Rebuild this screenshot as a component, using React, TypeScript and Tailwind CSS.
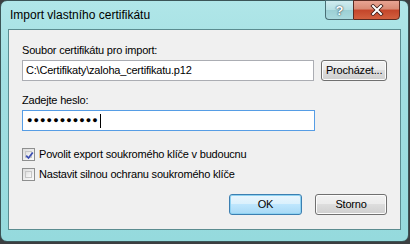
import React from "react";

const font = { fontFamily: '"Liberation Sans", Arial, sans-serif' };

function Checkbox({ checked }: { checked: boolean }) {
  return (
    <div className="w-[13px] h-[13px] border border-[#8e8f8f] bg-[linear-gradient(135deg,#dcdcdc,#fbfbfb)] p-[2px] shrink-0">
      <div className="w-full h-full border border-[#c6c6c6] bg-[linear-gradient(135deg,#e0e0e0,#fafafa)] relative">
        {checked && (
          <svg viewBox="0 0 9 9" className="absolute left-[-1px] top-[-1px] w-[9px] h-[9px]">
            <path d="M1.2 4.6 L3.5 7 L7.8 1.4" fill="none" stroke="#3b4eb4" strokeWidth="1.7" />
          </svg>
        )}
      </div>
    </div>
  );
}

function Button({ children, def, w }: { children: React.ReactNode; def?: boolean; w: string }) {
  return (
    <div
      className={`${w} h-[21px] rounded-[3px] border flex items-center justify-center text-[11px] text-black ${
        def
          ? "border-[#3c7fb1] shadow-[inset_0_0_0_1px_#8ed2f2] bg-[linear-gradient(#eaf6fd_0%,#d9f0fc_50%,#bee6fd_50%,#a7d9f5_100%)]"
          : "border-[#707070] shadow-[inset_0_0_0_1px_#fcfcfc] bg-[linear-gradient(#f2f2f2_0%,#ebebeb_50%,#dddddd_50%,#cfcfcf_100%)]"
      }`}
    >
      {children}
    </div>
  );
}

export default function App() {
  return (
    <div className="w-[410px] h-[244px] bg-[#3c3f41] overflow-hidden" style={font}>
      <div className="w-[409px] h-[242px] rounded-[7px] border border-[#3b5557] bg-[linear-gradient(180deg,#b0e6e8_0%,#a2dfe2_30%,#95dadd_100%)] flex flex-col">
        <div className="h-[28px] flex items-start relative shrink-0">
          <div className="text-[12px] text-black ml-[9px] mt-[7px] leading-[15px]">Import vlastního certifikátu</div>
          <div className="absolute right-[8px] top-[-1px] flex">
            <div className="w-[28px] h-[20px] border border-[#4a6f75] border-r-0 rounded-bl-[4px] bg-[linear-gradient(#d0ecef_0%,#b6dfe3_50%,#9ccfd4_50%,#a9dade_100%)] flex items-center justify-center">
              <span className="text-[13px] font-bold text-white leading-none" style={{ textShadow: "0 0 2px #2c4a55, 0 0 1px #2c4a55" }}>?</span>
            </div>
            <div className="w-[47px] h-[20px] border border-[#5a2b22] rounded-br-[4px] bg-[linear-gradient(#e8a493_0%,#d98a74_45%,#c4452a_50%,#d2603f_100%)] flex items-center justify-center">
              <svg viewBox="0 0 14 12" className="w-[14px] h-[12px]">
                <path d="M3 2 L11 10 M11 2 L3 10" stroke="#3a1a14" strokeWidth="3.6" strokeLinecap="square" />
                <path d="M3 2 L11 10 M11 2 L3 10" stroke="#ffffff" strokeWidth="2" strokeLinecap="square" />
              </svg>
            </div>
          </div>
        </div>
        <div className="mx-[7px] border border-[#5b8c90] flex-1 mb-[11px] bg-[#f0f0f0] flex flex-col px-[13px] pt-[13px] text-[11px] tracking-[-0.2px] text-black leading-[15px]">
          <div>Soubor certifikátu pro import:</div>
          <div className="flex mt-[2px] gap-[7px]">
            <div className="w-[293px] h-[21px] border border-[#abadb3] bg-white flex items-center pl-[3px]">
              C:\Certifikaty\zaloha_certifikatu.p12
            </div>
            <Button w="w-[66px]">Procházet...</Button>
          </div>
          <div className="mt-[12px]">Zadejte heslo:</div>
          <div className="w-[293px] h-[21px] mt-[2px] border border-[#569de5] bg-white flex items-center pl-[4px]">
            <span className="tracking-[1.1px] text-[9px] font-bold leading-none">●●●●●●●●●●●</span>
            <span className="w-px h-[14px] bg-black ml-[1px]" />
          </div>
          <div className="flex items-center gap-[4px] mt-[16px]">
            <Checkbox checked />
            <span>Povolit export soukromého klíče v budoucnu</span>
          </div>
          <div className="flex items-center gap-[4px] mt-[5px]">
            <Checkbox checked={false} />
            <span>Nastavit silnou ochranu soukromého klíče</span>
          </div>
          <div className="flex justify-end gap-[13px] mt-[12px] pr-[0px]">
            <Button def w="w-[73px]">OK</Button>
            <Button w="w-[72px]">Storno</Button>
          </div>
        </div>
      </div>
    </div>
  );
}
